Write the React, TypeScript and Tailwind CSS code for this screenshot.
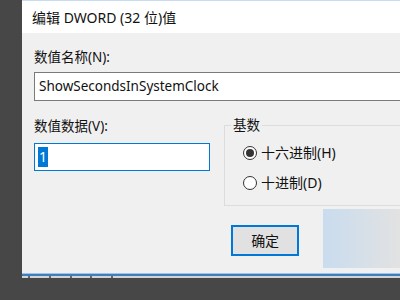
const cjk = { fontFamily: '"Segoe UI", "Noto Sans", "Noto Sans CJK SC", sans-serif' };

function Radio({ checked, label }: { checked?: boolean; label: string }) {
  return (
    <div className="flex items-center gap-[4px]">
      <span className="flex h-[14px] w-[14px] items-center justify-center rounded-full border border-[#333] bg-white">
        {checked && <span className="h-[8px] w-[8px] rounded-full bg-[#333]" />}
      </span>
      <span className="text-[14px] leading-[18px] text-[#111]">{label}</span>
    </div>
  );
}

export default function App() {
  return (
    <div className="relative flex h-[300px] w-[400px] overflow-hidden bg-[#474747]" style={cjk}>
      {/* Dialog */}
      <div className="ml-[22px] flex h-[278px] w-[420px] shrink-0 flex-col bg-[#f0f0f0]">
        <div className="h-px bg-[#c6dcf2]" />
        <div className="flex h-[32px] items-center bg-white pl-[10px] text-[14px] text-[#111]">
          编辑 DWORD (32 位)值
        </div>

        <div className="flex flex-1 flex-col pl-[12px]">
          <div className="mt-[15px] text-[13.5px] leading-[18px] text-[#111]">数值名称(N):</div>
          <div className="mt-[6px] flex h-[29px] items-center border border-[#7a7a7a] bg-white pl-[4px] text-[13.5px] text-[#111]">
            ShowSecondsInSystemClock
          </div>

          <div className="mt-[14px] flex">
            {/* Value data */}
            <div className="flex w-[176px] flex-col">
              <div className="mt-[2px] text-[13.5px] leading-[18px] text-[#111]">数值数据(V):</div>
              <div className="mt-[8px] flex h-[28px] items-center border border-[#0078d7] bg-white pl-[3px]">
                <span className="bg-[#0078d7] px-px text-[14px] leading-[20px] text-white">1</span>
              </div>
            </div>

            {/* Base group */}
            <div className="relative ml-[14px] mt-[10px] h-[81px] flex-1 border border-[#dcdcdc]">
              <span className="absolute -top-[10px] left-[6px] bg-[#f0f0f0] px-[2px] text-[13.5px] leading-[18px] text-[#111]">
                基数
              </span>
              <div className="flex flex-col gap-[12px] pl-[18px] pt-[18px]">
                <Radio checked label="十六进制(H)" />
                <Radio label="十进制(D)" />
              </div>
            </div>
          </div>

          {/* Buttons */}
          <div className="mt-[19px] flex pl-[197px]">
            <div className="flex h-[31px] w-[92px] items-center justify-center border-2 border-[#0078d7] bg-[#e1e1e1] text-[14px] text-[#111]">
              确定
            </div>
            <div className="ml-[75px] h-[31px] w-[92px] border border-[#adadad] bg-[#e1e1e1]" />
          </div>
        </div>

        {/* Taskbar-ish strip */}
        <div className="h-px bg-[#9fc4e6]" />
        <div className="h-[2px] bg-[#3c7fbf]" />
        <div className="relative h-[2px] bg-[#d4d4d4]">
          {[6, 27, 48, 68, 89].map((x) => (
            <span key={x} className="absolute top-0 h-[2px] w-[2px] bg-[#666]" style={{ left: x }} />
          ))}
        </div>
      </div>

      {/* Watermark overlay */}
      <div className="absolute left-[323px] top-[209px] h-[59px] w-[77px] bg-gradient-to-r from-[#c9dcee] to-[#e2e2e2]" />
    </div>
  );
}
